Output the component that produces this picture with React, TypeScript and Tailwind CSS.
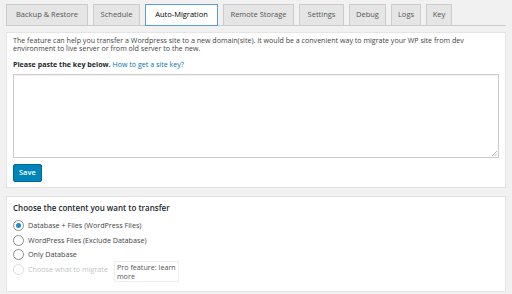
const TABS = [
  { label: "Backup & Restore", width: "w-[82px]" },
  { label: "Schedule", width: "w-[47px]" },
  { label: "Auto-Migration", width: "w-[73px]" },
  { label: "Remote Storage", width: "w-[71px]" },
  { label: "Settings", width: "w-[45px]" },
  { label: "Debug", width: "w-[37px]" },
  { label: "Logs", width: "w-[30px]" },
  { label: "Key", width: "w-[26px]" },
];

const OPTIONS = [
  { label: "Database + Files (WordPress Files)", checked: true },
  { label: "WordPress Files (Exclude Database)", checked: false },
  { label: "Only Database", checked: false },
];

function Radio({ checked, disabled }: { checked?: boolean; disabled?: boolean }) {
  return (
    <span
      className={`flex h-[11px] w-[11px] shrink-0 items-center justify-center rounded-full border bg-white ${
        disabled ? "border-[#dcdcdc]" : "border-[#8c8f94]"
      }`}
    >
      {checked ? <span className="h-[5px] w-[5px] rounded-full bg-[#1e8cbe]" /> : null}
    </span>
  );
}

export default function App() {
  const active = "Auto-Migration";

  return (
    <div className="h-[294px] w-full overflow-hidden bg-[#f1f1f1] px-[6px] pt-[4px] font-['Open_Sans',sans-serif] text-[#444]">
      <div className="flex gap-[5px] border-b border-[#ccc]">
        {TABS.map((tab) => (
          <div
            key={tab.label}
            className={`-mb-px flex h-[22px] shrink-0 items-center justify-center border text-[7.5px] whitespace-nowrap ${tab.width} ${
              tab.label === active
                ? "border-[#5b9dd9] bg-white text-[#000]"
                : "border-[#ccc] bg-[#e5e5e5] text-[#555]"
            }`}
          >
            {tab.label}
          </div>
        ))}
      </div>

      <div className="mt-[6px] border border-[#e5e5e5] bg-white px-[6px] pt-[3px] pb-[5px]">
        <p className="text-[7.1px] leading-[8px] text-[#444]">
          The feature can help you transfer a Wordpress site to a new domain(site). It would be a convenient way to migrate
          your WP site from dev environment to live server or from old server to the new.
        </p>
        <p className="mt-[8px] text-[7.1px] leading-[9px]">
          <span className="font-bold text-[#23282d]">Please paste the key below.</span>{" "}
          <a className="text-[#0073aa]">How to get a site key?</a>
        </p>
        <div className="relative mt-[5px] h-[84px] w-full border border-[#ccc] shadow-[inset_0_1px_2px_rgba(0,0,0,0.07)]">
          <svg className="absolute right-[1px] bottom-[1px]" width="6" height="6" viewBox="0 0 6 6">
            <path d="M6 1L1 6M6 3.5L3.5 6" stroke="#999" strokeWidth="0.7" />
          </svg>
        </div>
        <button className="mt-[6px] flex h-[18px] items-center rounded-[2px] border border-[#006799] bg-[#0085ba] px-[5px] text-[7.5px] font-semibold text-white">
          Save
        </button>
      </div>

      <div className="mt-[8px] h-[96px] border border-[#e5e5e5] bg-white px-[6px] pt-[5px]">
        <p className="text-[8px] font-semibold text-[#23282d]">Choose the content you want to transfer</p>
        <div className="mt-[6px] flex flex-col gap-[3.5px]">
          {OPTIONS.map((option) => (
            <label key={option.label} className="flex h-[11px] items-center gap-[4px] text-[7.2px] text-[#444]">
              <Radio checked={option.checked} />
              {option.label}
            </label>
          ))}
          <div className="flex items-start gap-[4px] text-[7.2px]">
            <Radio disabled />
            <span className="text-[#c3c4c7]">Choose what to migrate</span>
            <span className="ml-[2px] -mt-[3px] border border-[#eee] px-[2px] pt-[1px] leading-[9px] whitespace-nowrap text-[#555]">
              Pro feature: learn
              <br />
              more
            </span>
          </div>
        </div>
      </div>
    </div>
  );
}
